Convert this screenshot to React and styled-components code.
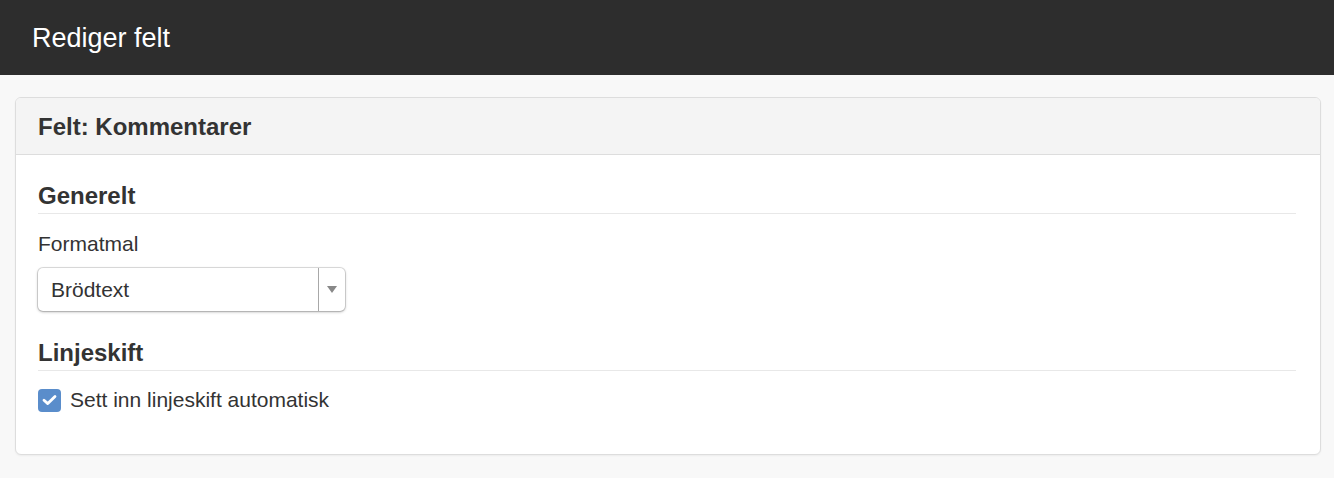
import React from "react";
import styled, { createGlobalStyle } from "styled-components";

const Global = createGlobalStyle`
  html, body { margin: 0; padding: 0; }
  body {
    background: #f8f8f8;
    font-family: "Liberation Sans", Arial, Helvetica, sans-serif;
    color: #333;
  }
`;

const TopBar = styled.header`
  height: 75px;
  background: #2d2d2d;
  display: flex;
  align-items: center;
  padding: 0 32px;
`;

const TopTitle = styled.h1`
  margin: 0;
  color: #fff;
  font-size: 27px;
  font-weight: normal;
  line-height: 30px;
`;

const Container = styled.main`
  padding: 22px 13px 24px 15px;
`;

const Panel = styled.section`
  background: #fff;
  border: 1px solid #ddd;
  border-radius: 6px;
  box-shadow: 0 1px 2px rgba(0, 0, 0, 0.05);
  overflow: hidden;
`;

const PanelHeading = styled.div`
  background: #f4f4f4;
  border-bottom: 1px solid #ddd;
  height: 56px;
  display: flex;
  align-items: center;
  padding: 0 22px;
`;

const PanelTitle = styled.h2`
  margin: 0;
  font-size: 24px;
  font-weight: bold;
  line-height: 27px;
  color: #333;
`;

const PanelBody = styled.div`
  padding: 27px 24px 39px 22px;
`;

const Legend = styled.h3`
  margin: ${(p) => (p.$first ? "0" : "28px")} 0 0;
  padding-bottom: 4px;
  border-bottom: 1px solid #e8e8e8;
  font-size: 24px;
  font-weight: bold;
  line-height: 27px;
  color: #333;
`;

const Label = styled.label`
  display: block;
  margin-top: 15px;
  font-size: 21px;
  line-height: 30px;
  color: #333;
`;

const SelectBox = styled.div`
  margin-top: 9px;
  width: 307px;
  height: 43px;
  box-sizing: border-box;
  display: flex;
  align-items: stretch;
  background: #fff;
  border-radius: 5px;
  box-shadow: 0 0 0 1px rgba(0, 0, 0, 0.12), 0 1px 3px rgba(0, 0, 0, 0.3);
`;

const SelectValue = styled.span`
  flex: 1;
  display: flex;
  align-items: center;
  padding-left: 13px;
  font-size: 21px;
  color: #333;
  border-right: 1px solid #a8a8a8;
`;

const SelectArrow = styled.span`
  width: 26px;
  display: flex;
  align-items: center;
  justify-content: center;
  &::after {
    content: "";
    width: 0;
    height: 0;
    border-left: 5px solid transparent;
    border-right: 5px solid transparent;
    border-top: 7px solid #888;
  }
`;

const CheckRow = styled.label`
  margin-top: 14px;
  display: flex;
  align-items: center;
  gap: 9px;
  font-size: 21px;
  line-height: 30px;
  color: #333;
`;

const CheckBox = styled.span`
  width: 23px;
  height: 23px;
  border-radius: 4px;
  background: #5a8dcb;
  display: flex;
  align-items: center;
  justify-content: center;
  flex-shrink: 0;
`;

export default function App() {
  return (
    <>
      <Global />
      <TopBar>
        <TopTitle>Rediger felt</TopTitle>
      </TopBar>
      <Container>
        <Panel>
          <PanelHeading>
            <PanelTitle>Felt: Kommentarer</PanelTitle>
          </PanelHeading>
          <PanelBody>
            <Legend $first>Generelt</Legend>
            <Label>Formatmal</Label>
            <SelectBox>
              <SelectValue>Brödtext</SelectValue>
              <SelectArrow />
            </SelectBox>
            <Legend>Linjeskift</Legend>
            <CheckRow>
              <CheckBox>
                <svg width="15" height="12" viewBox="0 0 15 12">
                  <path
                    d="M2 6.2 L5.8 9.6 L13 2.4"
                    fill="none"
                    stroke="#fff"
                    strokeWidth="2.8"
                    strokeLinecap="round"
                    strokeLinejoin="round"
                  />
                </svg>
              </CheckBox>
              Sett inn linjeskift automatisk
            </CheckRow>
          </PanelBody>
        </Panel>
      </Container>
    </>
  );
}
